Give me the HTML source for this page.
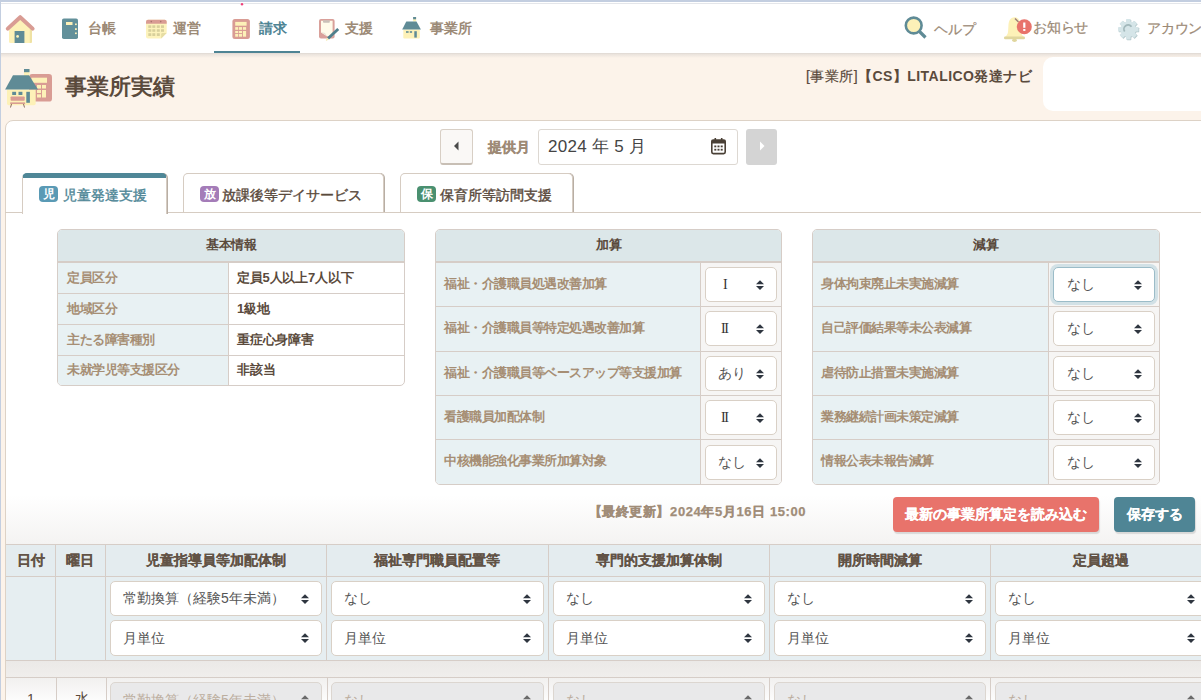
<!DOCTYPE html>
<html><head><meta charset="utf-8"><style>
*{box-sizing:border-box;margin:0;padding:0}
html,body{width:1201px;height:700px;overflow:hidden;background:#fcf3ea;font-family:"Liberation Sans",sans-serif;color:#5a4a3c}
.abs{position:absolute}
#frameTop{left:0;top:0;width:1201px;height:2px;background:#c3cee0}
#frameTop2{left:0;top:3px;width:1201px;height:1px;background:#e4e6ea}
#frameLeft{left:0;top:0;width:1px;height:700px;background:#c3cee0;z-index:50}
#nav{left:0;top:0;width:1201px;height:53px;background:#fff}
#navline{left:0;top:53px;width:1201px;height:5px;background:linear-gradient(#dcd6d0,#e9e2dc 20%,#fcf3ea)}
.nt{position:absolute;top:18px;font-size:14px;font-weight:bold;color:#9c8a76;line-height:20px;white-space:nowrap}
.nr{position:absolute;top:18px;font-size:14px;color:#9c8a76;line-height:20px;white-space:nowrap;-webkit-text-stroke:0.25px #9c8a76;letter-spacing:-0.2px}
#header{left:0;top:53px;width:1201px;height:72px;background:#fcf3ea}
#title{left:65px;top:73px;font-size:22px;font-weight:bold;color:#5a4a3c;line-height:28px;white-space:nowrap}
#office{left:806px;top:66px;font-size:14px;font-weight:bold;color:#5a4a3c;line-height:20px;white-space:nowrap;letter-spacing:0.45px}
#whitebox{left:1043px;top:57px;width:170px;height:54px;background:#fff;border-radius:10px}
#card{left:5px;top:120px;width:1220px;height:600px;background:#fff;border:1px solid #ddd2c6;border-radius:8px}
.btnp{position:absolute;left:440px;top:129px;width:33px;height:36px;background:#faf8f6;border:1px solid #d8cfc5;border-bottom:2px solid #c8bfb5;border-radius:3px}
.btnn{position:absolute;left:746px;top:129px;width:31px;height:36px;background:#d4d4d4;border-radius:3px}
#teikyo{left:488px;top:137px;font-size:14px;font-weight:bold;-webkit-text-stroke:0.3px #9e8a76;color:#9e8a76;line-height:20px;white-space:nowrap}
#monthin{left:538px;top:129px;width:200px;height:36px;border:1px solid #ddd8d2;border-radius:3px;background:#fff}
#monthtxt{left:548px;top:136px;font-size:17px;color:#444;line-height:22px;white-space:nowrap;letter-spacing:0.3px}
.tab{position:absolute;top:173px;height:39px;background:#fff;border:1px solid #d6ccc2;border-bottom:none;border-radius:5px 5px 0 0;box-shadow:1px 0 0 #b8aea4}
.tab .tt{position:absolute;top:12px;font-size:14px;line-height:18px;white-space:nowrap;color:#5a4a3c;-webkit-text-stroke:0.4px currentColor}
.badge{position:absolute;top:12px;width:19px;height:16px;border-radius:4px;color:#fff;font-size:12px;font-weight:bold;line-height:16px;text-align:center}
#tabline{left:5px;top:212px;width:1201px;height:1px;background:#d6ccc2}
.tbl{position:absolute;border:1px solid #d6cdc7;border-radius:5px;overflow:hidden;background:#fff}
.th{position:absolute;left:0;top:0;right:0;height:33px;background:#dce7e9;border-bottom:2px solid #d6cdc7;letter-spacing:0;font-size:13px;font-weight:bold;color:#5a4a3c;text-align:center;line-height:29px}
.row{position:absolute;left:0;right:0;border-top:1px solid #d6cdc7}
.lab{position:absolute;left:0;top:0;bottom:0;background:#e8f1f3;border-right:1px solid #d6cdc7;letter-spacing:-0.5px;font-size:13px;font-weight:bold;color:#a68e74;white-space:nowrap}
.val{position:absolute;top:0;bottom:0;right:0;letter-spacing:-0.2px;font-size:13px;font-weight:bold;color:#5a4a3c;white-space:nowrap}
.sel{position:absolute;background:#fff;border:1px solid #d9d0c6;border-radius:5px;font-size:14px;color:#555;white-space:nowrap}
.arr{position:absolute;top:50%;margin-top:-5px;width:8px;height:10px}
.rom{font-family:"Liberation Serif",serif;font-size:14px;color:#333}
#lastupd{left:588.5px;top:502px;font-size:13px;font-weight:bold;-webkit-text-stroke:0.25px #a08c78;color:#a08c78;line-height:20px;white-space:nowrap;letter-spacing:0.6px}
.btn{position:absolute;top:497px;height:35px;border-radius:4px;color:#fff;font-size:14px;font-weight:bold;-webkit-text-stroke:0.15px #fff;line-height:34px;text-align:center;white-space:nowrap;box-shadow:1px 2px 1px rgba(0,0,0,0.12)}
#shadowgrad{left:6px;top:495px;width:1201px;height:49px;background:linear-gradient(rgba(245,244,243,0),#f4f3f2)}
.bth{position:absolute;font-size:14px;font-weight:bold;color:#625346;-webkit-text-stroke:0.15px #625346;text-align:center;line-height:20px;white-space:nowrap;top:550px}
#gap{left:6px;top:661px;width:1201px;height:16px;background:linear-gradient(#ebe9e7,#f0eeec)}
.dsel{position:absolute;background:#e9e9ea;border:1px solid #dcd6d0;border-radius:5px;font-size:14px;color:#bcae9f;white-space:nowrap}
.vl{position:absolute;width:1px;background:#d6cdc7}
.hl{position:absolute;height:1px;background:#d6cdc7}
</style></head><body>
<div class="abs" id="nav"></div><div class="abs" id="frameTop"></div><div class="abs" id="frameTop2"></div><div class="abs" id="frameLeft"></div><div class="abs" id="navline"></div>
<!-- nav icons -->
<svg class="abs" style="left:0;top:0" width="1201" height="53">
  <!-- home -->
  <g>
    <path d="M9 30 L20.5 18.5 L32 30 L32 41.5 Q32 43 30.5 43 L10.5 43 Q9 43 9 41.5 Z" fill="#fdf1b8"/>
    <path d="M30.5 29 L32 30.5 L32 41.5 Q32 43 30.5 43 L29.8 43 L29.8 29 Z" fill="#efe2a4"/>
    <path d="M7.8 28.6 L20.2 17.2 L32.6 28.6" fill="none" stroke="#d99c94" stroke-width="4" stroke-linejoin="round" stroke-linecap="round"/>
    <rect x="14.6" y="31" width="9.8" height="12" fill="#5f8b96"/>
    <circle cx="17.6" cy="36.4" r="1.4" fill="#fdf1b8"/>
  </g>
  <circle cx="242" cy="4.3" r="1.2" fill="#f0407a"/>
  <!-- notebook -->
  <g>
    <rect x="62" y="18.5" width="16" height="20.5" rx="1.8" fill="#62909a"/>
    <rect x="66" y="22" width="6.5" height="3" fill="#fdf1b8"/>
    <rect x="75" y="23.5" width="1.8" height="1.6" fill="#fdf1b8"/>
    <rect x="75" y="28.2" width="1.8" height="1.8" fill="#fdf1b8"/>
    <rect x="75" y="32.5" width="1.8" height="1.6" fill="#fdf1b8"/>
  </g>
  <!-- calendar -->
  <g>
    <path d="M146 21.8 Q146 19.8 148 19.8 L164.7 19.8 Q166.7 19.8 166.7 21.8 L166.7 33 L161.2 38.5 L148 38.5 Q146 38.5 146 36.5 Z" fill="#fdf3bc"/>
    <path d="M146 23.8 L146 21.8 Q146 19.8 148 19.8 L164.7 19.8 Q166.7 19.8 166.7 21.8 L166.7 23.8 Z" fill="#d99c94"/>
    <g fill="#d8d09c">
      <rect x="148.3" y="25.3" width="3" height="2.6"/><rect x="152.3" y="25.3" width="3" height="2.6"/><rect x="156.8" y="25.3" width="3" height="2.6"/><rect x="161" y="25.3" width="3" height="2.6"/>
      <rect x="148.3" y="29.2" width="3" height="2.6"/><rect x="152.3" y="29.2" width="3" height="2.6"/><rect x="156.8" y="29.2" width="3" height="2.6"/><rect x="161" y="29.2" width="3" height="2.6"/>
      <rect x="148.3" y="33.2" width="3" height="2.8"/><rect x="152.3" y="33.2" width="3" height="2.8"/><rect x="156.8" y="33.2" width="3" height="2.8"/>
    </g>
    <path d="M161.2 38.5 L161.2 34.2 Q161.2 33 162.4 33 L166.7 33 Z" fill="#e6dda4"/>
    <circle cx="151.3" cy="21.6" r="0.8" fill="#a8746c"/><circle cx="160.7" cy="21.6" r="0.8" fill="#a8746c"/>
  </g>
  <!-- calculator -->
  <g>
    <rect x="232.4" y="19" width="17.5" height="20" rx="2.5" fill="#d99c94"/>
    <rect x="235.2" y="21.9" width="11.4" height="3.8" fill="#fdf1b8"/>
    <g fill="#fdf1b8">
      <rect x="235.2" y="27.1" width="3" height="2.7"/><rect x="239" y="27.1" width="3" height="2.7"/><rect x="242.9" y="27.1" width="3.2" height="2.7"/>
      <rect x="235.2" y="31" width="3" height="2.1"/><rect x="239" y="31" width="3" height="2.1"/><rect x="242.9" y="31" width="3.2" height="5.7"/>
      <rect x="235.2" y="34" width="3" height="2.7"/><rect x="239" y="34" width="3" height="2.7"/>
    </g>
  </g>
  <!-- clipboard -->
  <g>
    <rect x="319" y="18.9" width="15.6" height="19.6" rx="2" fill="#d9a09a"/>
    <path d="M321 20.7 L332.6 20.7 L332.6 36.2 L327 36.2 L321 32.5 Z" fill="#fffbea"/>
    <path d="M321 32 L325 33 L327 36.2 Z" fill="#e8e4d4"/>
    <rect x="323" y="20.2" width="6.8" height="2.6" rx="0.8" fill="#c9c0b8"/>
    <path d="M327 37.5 L337.3 28 L339.2 30 L329 39.5 Z" fill="#4f7f8c"/>
    <path d="M327 37.5 L329 39.5 L325.8 41 Z" fill="#f3e9b0"/>
  </g>
  <!-- house -->
  <g>
    <rect x="403.3" y="29.4" width="16.5" height="9.2" rx="1" fill="#fdf1b8"/>
    <rect x="413.1" y="17" width="3" height="4.5" fill="#fdf1b8"/>
    <rect x="413.1" y="17" width="3" height="2.3" fill="#5f8b96"/>
    <path d="M402.2 29.6 L406.3 21.4 L416.5 21.4 L420.9 29.6 Z" fill="#5f8b96"/>
    <rect x="406" y="31.2" width="2.6" height="1.6" fill="#5f8b96"/>
    <rect x="409.8" y="31.2" width="2.3" height="1.6" fill="#5f8b96"/>
    <rect x="414.3" y="31.2" width="2.5" height="6.4" fill="#5f8b96"/>
  </g>
  <!-- underline active -->
  <rect x="214" y="51" width="86" height="3" fill="#4e8494"/>
  <!-- search -->
  <g>
    <line x1="919.5" y1="31.5" x2="925.5" y2="37.5" stroke="#5f8b96" stroke-width="3.2"/>
    <circle cx="913.7" cy="25.5" r="7.9" fill="#fdf1b8" stroke="#5f8b96" stroke-width="2.6"/>
  </g>
  <!-- bell -->
  <g>
    <path d="M1014.5 17.3 C1010.2 17.3 1008.6 21 1008.4 26 L1008.1 31.5 Q1007.6 35.6 1004.2 37.6 L1024.8 37.6 Q1021.4 35.6 1020.9 31.5 L1020.6 26 C1020.4 21 1018.8 17.3 1014.5 17.3 Z" fill="#fdf1b8"/>
    <path d="M1015 18.5 L1018.5 22" stroke="#9b7d7a" stroke-width="1.4"/>
    <rect x="1004" y="36.6" width="21" height="2.6" rx="1.2" fill="#e0d69e"/>
    <ellipse cx="1014.5" cy="40.2" rx="2.4" ry="1.8" fill="#e0d69e"/>
    <circle cx="1024.3" cy="26.8" r="7.5" fill="#e8736b"/>
    <rect x="1023.2" y="22.5" width="2.2" height="5.3" fill="#fff"/>
    <rect x="1023.2" y="29" width="2.2" height="1.9" fill="#fff"/>
  </g>
  <!-- gear -->
  <g transform="translate(1128.3,29.3)">
    <g fill="#b5c9cc" transform="translate(0.7,0.7)">
      <circle r="7.8"/>
      <rect x="-2.3" y="-10.2" width="4.6" height="20.4" rx="0.6"/>
      <rect x="-2.3" y="-10.2" width="4.6" height="20.4" rx="0.6" transform="rotate(45)"/>
      <rect x="-2.3" y="-10.2" width="4.6" height="20.4" rx="0.6" transform="rotate(90)"/>
      <rect x="-2.3" y="-10.2" width="4.6" height="20.4" rx="0.6" transform="rotate(135)"/>
    </g>
    <g fill="#d5e5e8">
      <circle r="7.8"/>
      <rect x="-2.3" y="-10.2" width="4.6" height="20.4" rx="0.6"/>
      <rect x="-2.3" y="-10.2" width="4.6" height="20.4" rx="0.6" transform="rotate(45)"/>
      <rect x="-2.3" y="-10.2" width="4.6" height="20.4" rx="0.6" transform="rotate(90)"/>
      <rect x="-2.3" y="-10.2" width="4.6" height="20.4" rx="0.6" transform="rotate(135)"/>
    </g>
    <path d="M-3.6 2.2 A4 4 0 0 1 3.2 -2.6" fill="none" stroke="#a3b9bc" stroke-width="1.8"/>
  </g>
</svg>
<div class="nt" style="left:88px">台帳</div>
<div class="nt" style="left:173px">運営</div>
<div class="nt" style="left:259px;color:#4e8494">請求</div>
<div class="nt" style="left:345px">支援</div>
<div class="nt" style="left:430px">事業所</div>
<div class="nr" style="left:934px;top:19px">ヘルプ</div>
<div class="nr" style="left:1033px;top:17px">お知らせ</div>
<div class="nr" style="left:1147px">アカウント</div>

<div class="abs" id="header"></div>
<div class="abs" id="navline"></div>
<svg class="abs" style="left:0;top:60px" width="60" height="55" viewBox="0 60 60 55">
  <rect x="29" y="74" width="23" height="27.6" rx="3.2" fill="#d99c94"/>
  <rect x="31.4" y="77.7" width="15.6" height="5.1" fill="#fdf1b8"/>
  <g fill="#fdf1b8">
    <rect x="37" y="85" width="4" height="3.5"/><rect x="42" y="85" width="4" height="3.5"/>
    <rect x="37" y="90" width="4" height="3"/><rect x="42" y="90" width="4" height="7.5"/>
    <rect x="37" y="94.3" width="4" height="3.2"/>
  </g>
  <rect x="24" y="69" width="5.5" height="7" fill="#fdf1b8"/>
  <rect x="24" y="69" width="5.5" height="3.2" fill="#5f8b96"/>
  <path d="M7 89.5 L35.7 89.5 L35.7 103.5 Q35.7 105.2 34 105.2 L8.7 105.2 Q7 105.2 7 103.5 Z" fill="#fdf1b8"/>
  <path d="M5.1 89.5 L13 75.3 L29 75.3 L38 89.5 Z" fill="#5f8b96"/>
  <rect x="12.2" y="91.8" width="3.9" height="3.2" fill="#5f8b96"/>
  <rect x="18.5" y="91.8" width="3.9" height="3.2" fill="#5f8b96"/>
  <rect x="26.3" y="91.8" width="3.6" height="11" fill="#5f8b96"/>
  <rect x="10.6" y="96.5" width="14.1" height="4.3" rx="0.8" fill="#d99c94"/>
  <rect x="10.2" y="102.4" width="14.9" height="1.6" fill="#d99c94"/>
  <path d="M11.5 104 L10.5 107.5 M23.5 104 L24.5 107.5" stroke="#8b6b5b" stroke-width="1"/>
</svg>
<div class="abs" id="title">事業所実績</div>
<div class="abs" id="office"><span style="font-weight:normal;-webkit-text-stroke:0.2px #5a4a3c">[事業所]</span>【CS】LITALICO発達ナビ</div>
<div class="abs" id="whitebox"></div>

<div class="abs" id="card"></div>
<div class="btnp"><svg class="abs" style="left:11px;top:10px" width="10" height="12"><path d="M2 6 L6.5 1.5 L6.5 10.5 Z" fill="#4a4a4a"/></svg></div>
<div class="abs" id="teikyo">提供月</div>
<div class="abs" id="monthin"></div>
<div class="abs" id="monthtxt">2024 年 5 月</div>
<svg class="abs" style="left:710px;top:137px" width="18" height="19">
  <rect x="1.8" y="3" width="13.4" height="13.6" rx="1.5" fill="none" stroke="#4a4036" stroke-width="1.6"/>
  <rect x="1.8" y="3" width="13.4" height="3.5" fill="#4a4036"/>
  <rect x="4.5" y="1" width="1.6" height="3" fill="#4a4036"/><rect x="10.9" y="1" width="1.6" height="3" fill="#4a4036"/>
  <g fill="#4a4036"><rect x="4.3" y="8.5" width="2" height="1.8"/><rect x="7.5" y="8.5" width="2" height="1.8"/><rect x="10.7" y="8.5" width="2" height="1.8"/>
  <rect x="4.3" y="11.8" width="2" height="1.8"/><rect x="7.5" y="11.8" width="2" height="1.8"/><rect x="10.7" y="11.8" width="2" height="1.8"/></g>
</svg>
<div class="btnn"><svg class="abs" style="left:11px;top:11px" width="10" height="12"><path d="M7.5 6 L3 1.5 L3 10.5 Z" fill="#fff"/></svg></div>
<div class="abs" id="tabline"></div>
<div class="tab" style="left:22px;width:145px;border-top:5px solid #4f8797;height:41px;z-index:2">
  <div class="badge" style="left:16px;top:8px;background:#5a9ab5">児</div>
  <div class="tt" style="left:40px;top:8px;color:#4f8797">児童発達支援</div>
</div>
<div class="tab" style="left:183px;width:201px">
  <div class="badge" style="left:16px;background:#a47cb8">放</div>
  <div class="tt" style="left:38px">放課後等デイサービス</div>
</div>
<div class="tab" style="left:400px;width:173px">
  <div class="badge" style="left:16px;background:#4a9070">保</div>
  <div class="tt" style="left:39px">保育所等訪問支援</div>
</div>
<div class="tbl" style="left:57px;top:229px;width:348px;height:157px"><div class="th" style="letter-spacing:-0.5px">基本情報</div><div class="row" style="top:33px;height:30px;border-top:none;"><div class="lab" style="width:171px;line-height:29px;padding-left:9px">定員区分</div><div class="val" style="left:171px;line-height:29px;padding-left:8px">定員5人以上7人以下</div></div><div class="row" style="top:63px;height:31px;"><div class="lab" style="width:171px;line-height:29px;padding-left:9px">地域区分</div><div class="val" style="left:171px;line-height:29px;padding-left:8px">1級地</div></div><div class="row" style="top:94px;height:31px;"><div class="lab" style="width:171px;line-height:29px;padding-left:9px">主たる障害種別</div><div class="val" style="left:171px;line-height:29px;padding-left:8px">重症心身障害</div></div><div class="row" style="top:125px;height:30px;"><div class="lab" style="width:171px;line-height:28px;padding-left:9px">未就学児等支援区分</div><div class="val" style="left:171px;line-height:28px;padding-left:8px">非該当</div></div></div>
<div class="tbl" style="left:435px;top:229px;width:347px;height:256px"><div class="th">加算</div><div class="row" style="top:33px;height:43px;border-top:none;"><div class="lab" style="width:265px;line-height:41px;padding-left:8px">福祉・介護職員処遇改善加算</div><div class="val" style="left:265px;background:#f6f5f4"></div></div><div class="row" style="top:76px;height:45px;"><div class="lab" style="width:265px;line-height:42px;padding-left:8px">福祉・介護職員等特定処遇改善加算</div><div class="val" style="left:265px;background:#f6f5f4"></div></div><div class="row" style="top:121px;height:44px;"><div class="lab" style="width:265px;line-height:41px;padding-left:8px">福祉・介護職員等ベースアップ等支援加算</div><div class="val" style="left:265px;background:#f6f5f4"></div></div><div class="row" style="top:165px;height:44px;"><div class="lab" style="width:265px;line-height:41px;padding-left:8px">看護職員加配体制</div><div class="val" style="left:265px;background:#f6f5f4"></div></div><div class="row" style="top:209px;height:45px;"><div class="lab" style="width:265px;line-height:42px;padding-left:8px">中核機能強化事業所加算対象</div><div class="val" style="left:265px;background:#f6f5f4"></div></div></div>
<div class="tbl" style="left:812px;top:229px;width:348px;height:256px"><div class="th">減算</div><div class="row" style="top:33px;height:43px;border-top:none;"><div class="lab" style="width:236px;line-height:41px;padding-left:8px">身体拘束廃止未実施減算</div><div class="val" style="left:236px;background:#f6f5f4"></div></div><div class="row" style="top:76px;height:45px;"><div class="lab" style="width:236px;line-height:42px;padding-left:8px">自己評価結果等未公表減算</div><div class="val" style="left:236px;background:#f6f5f4"></div></div><div class="row" style="top:121px;height:44px;"><div class="lab" style="width:236px;line-height:41px;padding-left:8px">虐待防止措置未実施減算</div><div class="val" style="left:236px;background:#f6f5f4"></div></div><div class="row" style="top:165px;height:44px;"><div class="lab" style="width:236px;line-height:41px;padding-left:8px">業務継続計画未策定減算</div><div class="val" style="left:236px;background:#f6f5f4"></div></div><div class="row" style="top:209px;height:45px;"><div class="lab" style="width:236px;line-height:42px;padding-left:8px">情報公表未報告減算</div><div class="val" style="left:236px;background:#f6f5f4"></div></div></div>
<div class="sel" style="left:705px;top:267px;width:72px;height:35px;line-height:33px;padding-left:17px"><span class="rom" style="letter-spacing:-1.5px">I</span><svg class="arr" style="right:12px" width="8" height="10"><path d="M0 4.3 L4 0.2 L8 4.3 Z M0 5.9 L4 10 L8 5.9 Z" fill="#2f3640"/></svg></div><div class="sel" style="left:705px;top:311px;width:72px;height:35px;line-height:33px;padding-left:15px"><span class="rom" style="letter-spacing:-1.5px">II</span><svg class="arr" style="right:12px" width="8" height="10"><path d="M0 4.3 L4 0.2 L8 4.3 Z M0 5.9 L4 10 L8 5.9 Z" fill="#2f3640"/></svg></div><div class="sel" style="left:705px;top:356px;width:72px;height:35px;line-height:33px;padding-left:12px">あり<svg class="arr" style="right:12px" width="8" height="10"><path d="M0 4.3 L4 0.2 L8 4.3 Z M0 5.9 L4 10 L8 5.9 Z" fill="#2f3640"/></svg></div><div class="sel" style="left:705px;top:400px;width:72px;height:35px;line-height:33px;padding-left:15px"><span class="rom" style="letter-spacing:-1.5px">II</span><svg class="arr" style="right:12px" width="8" height="10"><path d="M0 4.3 L4 0.2 L8 4.3 Z M0 5.9 L4 10 L8 5.9 Z" fill="#2f3640"/></svg></div><div class="sel" style="left:705px;top:445px;width:72px;height:35px;line-height:33px;padding-left:12px">なし<svg class="arr" style="right:12px" width="8" height="10"><path d="M0 4.3 L4 0.2 L8 4.3 Z M0 5.9 L4 10 L8 5.9 Z" fill="#2f3640"/></svg></div><div class="sel" style="left:1053px;top:267px;width:102px;height:35px;line-height:33px;padding-left:13px;border-color:#9bbcc8;box-shadow:0 0 0 3px #d2e1e6;">なし<svg class="arr" style="right:12px" width="8" height="10"><path d="M0 4.3 L4 0.2 L8 4.3 Z M0 5.9 L4 10 L8 5.9 Z" fill="#2f3640"/></svg></div><div class="sel" style="left:1053px;top:311px;width:102px;height:35px;line-height:33px;padding-left:13px;">なし<svg class="arr" style="right:12px" width="8" height="10"><path d="M0 4.3 L4 0.2 L8 4.3 Z M0 5.9 L4 10 L8 5.9 Z" fill="#2f3640"/></svg></div><div class="sel" style="left:1053px;top:356px;width:102px;height:35px;line-height:33px;padding-left:13px;">なし<svg class="arr" style="right:12px" width="8" height="10"><path d="M0 4.3 L4 0.2 L8 4.3 Z M0 5.9 L4 10 L8 5.9 Z" fill="#2f3640"/></svg></div><div class="sel" style="left:1053px;top:400px;width:102px;height:35px;line-height:33px;padding-left:13px;">なし<svg class="arr" style="right:12px" width="8" height="10"><path d="M0 4.3 L4 0.2 L8 4.3 Z M0 5.9 L4 10 L8 5.9 Z" fill="#2f3640"/></svg></div><div class="sel" style="left:1053px;top:445px;width:102px;height:35px;line-height:33px;padding-left:13px;">なし<svg class="arr" style="right:12px" width="8" height="10"><path d="M0 4.3 L4 0.2 L8 4.3 Z M0 5.9 L4 10 L8 5.9 Z" fill="#2f3640"/></svg></div>
<div class="abs" id="shadowgrad"></div>
<div class="abs" id="lastupd">【最終更新】2024年5月16日 15:00</div>
<div class="btn" style="left:893px;width:206px;background:#e8736b">最新の事業所算定を読み込む</div>
<div class="btn" style="left:1114px;width:81px;background:#4f8595">保存する</div>
<div class="abs" style="left:6px;top:544px;width:1201px;height:33px;background:#e4ecef"></div><div class="abs" style="left:6px;top:577px;width:1201px;height:83px;background:#e6eef1"></div><div class="hl" style="left:6px;top:544px;width:1201px"></div><div class="hl" style="left:6px;top:576px;width:1201px"></div><div class="hl" style="left:6px;top:660px;width:1201px"></div><div class="abs" id="gap"></div><div class="abs" style="left:6px;top:678px;width:1201px;height:30px;background:linear-gradient(#f1f0ef,#fdfdfd 80%)"></div><div class="hl" style="left:6px;top:677px;width:1201px"></div><div class="vl" style="left:55px;top:544px;height:117px"></div><div class="vl" style="left:56px;top:677px;height:30px"></div><div class="vl" style="left:105px;top:544px;height:117px"></div><div class="vl" style="left:106px;top:677px;height:30px"></div><div class="vl" style="left:326px;top:544px;height:117px"></div><div class="vl" style="left:327px;top:677px;height:30px"></div><div class="vl" style="left:548px;top:544px;height:117px"></div><div class="vl" style="left:548px;top:677px;height:30px"></div><div class="vl" style="left:769px;top:544px;height:117px"></div><div class="vl" style="left:769px;top:677px;height:30px"></div><div class="vl" style="left:990px;top:544px;height:117px"></div><div class="vl" style="left:990px;top:677px;height:30px"></div><div class="bth" style="left:6px;width:49px">日付</div><div class="bth" style="left:55px;width:50px">曜日</div><div class="bth" style="left:105px;width:221px">児童指導員等加配体制</div><div class="bth" style="left:326px;width:222px">福祉専門職員配置等</div><div class="bth" style="left:548px;width:221px">専門的支援加算体制</div><div class="bth" style="left:769px;width:221px">開所時間減算</div><div class="bth" style="left:990px;width:222px">定員超過</div><div class="abs" style="left:6px;top:689px;width:50px;text-align:center;font-size:14px;color:#5a4a3c;line-height:20px">1</div><div class="abs" style="left:57px;top:688px;width:50px;text-align:center;font-size:14px;color:#5a4a3c;line-height:20px">水</div><div class="sel" style="left:110px;top:581px;width:212px;height:35px;line-height:33px;padding-left:12px">常勤換算（経験5年未満）<svg class="arr" style="right:12px" width="8" height="10"><path d="M0 4.3 L4 0.2 L8 4.3 Z M0 5.9 L4 10 L8 5.9 Z" fill="#2f3640"/></svg></div><div class="sel" style="left:110px;top:620px;width:212px;height:36px;line-height:34px;padding-left:12px">月単位<svg class="arr" style="right:12px" width="8" height="10"><path d="M0 4.3 L4 0.2 L8 4.3 Z M0 5.9 L4 10 L8 5.9 Z" fill="#2f3640"/></svg></div><div class="dsel" style="left:110px;top:682px;width:212px;height:36px;line-height:34px;padding-left:12px">常勤換算（経験5年未満）<svg class="abs" style="right:12px;top:12px" width="8" height="10"><path d="M0 4.3 L4 0.2 L8 4.3 Z" fill="#6a6a6a"/></svg></div><div class="sel" style="left:331px;top:581px;width:213px;height:35px;line-height:33px;padding-left:12px">なし<svg class="arr" style="right:12px" width="8" height="10"><path d="M0 4.3 L4 0.2 L8 4.3 Z M0 5.9 L4 10 L8 5.9 Z" fill="#2f3640"/></svg></div><div class="sel" style="left:331px;top:620px;width:213px;height:36px;line-height:34px;padding-left:12px">月単位<svg class="arr" style="right:12px" width="8" height="10"><path d="M0 4.3 L4 0.2 L8 4.3 Z M0 5.9 L4 10 L8 5.9 Z" fill="#2f3640"/></svg></div><div class="dsel" style="left:331px;top:682px;width:213px;height:36px;line-height:34px;padding-left:12px">なし<svg class="abs" style="right:12px;top:12px" width="8" height="10"><path d="M0 4.3 L4 0.2 L8 4.3 Z" fill="#6a6a6a"/></svg></div><div class="sel" style="left:553px;top:581px;width:212px;height:35px;line-height:33px;padding-left:12px">なし<svg class="arr" style="right:12px" width="8" height="10"><path d="M0 4.3 L4 0.2 L8 4.3 Z M0 5.9 L4 10 L8 5.9 Z" fill="#2f3640"/></svg></div><div class="sel" style="left:553px;top:620px;width:212px;height:36px;line-height:34px;padding-left:12px">月単位<svg class="arr" style="right:12px" width="8" height="10"><path d="M0 4.3 L4 0.2 L8 4.3 Z M0 5.9 L4 10 L8 5.9 Z" fill="#2f3640"/></svg></div><div class="dsel" style="left:553px;top:682px;width:212px;height:36px;line-height:34px;padding-left:12px">なし<svg class="abs" style="right:12px;top:12px" width="8" height="10"><path d="M0 4.3 L4 0.2 L8 4.3 Z" fill="#6a6a6a"/></svg></div><div class="sel" style="left:774px;top:581px;width:212px;height:35px;line-height:33px;padding-left:12px">なし<svg class="arr" style="right:12px" width="8" height="10"><path d="M0 4.3 L4 0.2 L8 4.3 Z M0 5.9 L4 10 L8 5.9 Z" fill="#2f3640"/></svg></div><div class="sel" style="left:774px;top:620px;width:212px;height:36px;line-height:34px;padding-left:12px">月単位<svg class="arr" style="right:12px" width="8" height="10"><path d="M0 4.3 L4 0.2 L8 4.3 Z M0 5.9 L4 10 L8 5.9 Z" fill="#2f3640"/></svg></div><div class="dsel" style="left:774px;top:682px;width:212px;height:36px;line-height:34px;padding-left:12px">なし<svg class="abs" style="right:12px;top:12px" width="8" height="10"><path d="M0 4.3 L4 0.2 L8 4.3 Z" fill="#6a6a6a"/></svg></div><div class="sel" style="left:995px;top:581px;width:213px;height:35px;line-height:33px;padding-left:12px">なし<svg class="arr" style="right:12px" width="8" height="10"><path d="M0 4.3 L4 0.2 L8 4.3 Z M0 5.9 L4 10 L8 5.9 Z" fill="#2f3640"/></svg></div><div class="sel" style="left:995px;top:620px;width:213px;height:36px;line-height:34px;padding-left:12px">月単位<svg class="arr" style="right:12px" width="8" height="10"><path d="M0 4.3 L4 0.2 L8 4.3 Z M0 5.9 L4 10 L8 5.9 Z" fill="#2f3640"/></svg></div><div class="dsel" style="left:995px;top:682px;width:213px;height:36px;line-height:34px;padding-left:12px">なし<svg class="abs" style="right:12px;top:12px" width="8" height="10"><path d="M0 4.3 L4 0.2 L8 4.3 Z" fill="#6a6a6a"/></svg></div>
</body></html>
